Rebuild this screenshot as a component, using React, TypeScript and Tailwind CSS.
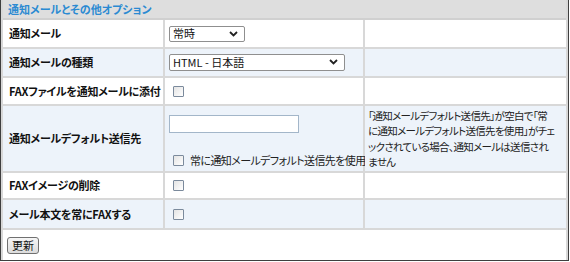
import React, { useState } from 'react';

const Chevron = () => (
  <svg width="9" height="6" viewBox="0 0 9 6" className="pointer-events-none absolute right-[7px] top-[5px]">
    <path d="M1 1 L4.5 4.5 L8 1" fill="none" stroke="#222" strokeWidth="1.8" />
  </svg>
);

const Checkbox = ({ checked, onChange }: { checked: boolean; onChange: (v: boolean) => void }) => (
  <input
    type="checkbox"
    checked={checked}
    onChange={(e) => onChange(e.target.checked)}
    className="appearance-none shrink-0 w-[11px] h-[11px] border border-[#7b8a9c] bg-gradient-to-br from-[#e4e4e4] to-white rounded-[1px] checked:bg-[#3d7fd1] m-0 block"
  />
);

const labelCls =
  "flex items-center pl-[6px] font-bold text-[11px] tracking-[-0.25px] text-[#111] whitespace-nowrap [font-feature-settings:'palt'] border-r-2 border-b-2 border-[#d8d8d8]";
const midCls = 'flex items-center pl-[4px] border-r-2 border-b-2 border-[#d8d8d8]';
const lastCls = 'border-b-2 border-[#d8d8d8]';

const App = () => {
  const [mode, setMode] = useState('always');
  const [format, setFormat] = useState('html-ja');
  const [attach, setAttach] = useState(false);
  const [dest, setDest] = useState('');
  const [useDefault, setUseDefault] = useState(false);
  const [deleteImg, setDeleteImg] = useState(false);
  const [alwaysFax, setAlwaysFax] = useState(false);

  return (
    <div className="w-[570px] h-[262px] bg-white" style={{ fontFamily: '"Noto Sans CJK JP", "Noto Sans", sans-serif' }}>
      <div className="w-[569px] border-l border-r border-b border-[#3f3f3f]">
        <div className="border-l-2 border-r-2 border-[#d8d8d8]">
          {/* header */}
          <div className="h-[20px] bg-[#dedede] border-b-2 border-[#d0d0d0] flex items-center pl-[5px]">
            <span className="text-[11px] font-bold text-[#2b8ad2] [font-feature-settings:'palt'] leading-none">
              通知メールとその他オプション
            </span>
          </div>

          {/* rows */}
          <div className="grid grid-cols-[162px_200px_1fr]">
            <div className={`${labelCls} h-[29px]`}>通知メール</div>
            <div className={midCls}>
              <div className="relative">
                <select
                  value={mode}
                  onChange={(e) => setMode(e.target.value)}
                  className="block appearance-none w-[76px] h-[16px] border border-[#8f8f8f] rounded-[2px] bg-white text-[11px] pl-[3px] py-0 leading-none text-[#111]"
                >
                  <option value="always">常時</option>
                  <option value="never">しない</option>
                </select>
                <Chevron />
              </div>
            </div>
            <div className={lastCls}></div>

            <div className={`${labelCls} h-[29px] bg-[#edf3fa]`}>通知メールの種類</div>
            <div className={`${midCls} bg-[#edf3fa]`}>
              <div className="relative">
                <select
                  value={format}
                  onChange={(e) => setFormat(e.target.value)}
                  className="block appearance-none w-[176px] h-[17px] border border-[#8f8f8f] rounded-[2px] bg-white text-[11px] pl-[3px] py-0 leading-none text-[#111]"
                >
                  <option value="html-ja">HTML - 日本語</option>
                  <option value="text-ja">テキスト - 日本語</option>
                </select>
                <Chevron />
              </div>
            </div>
            <div className={`${lastCls} bg-[#edf3fa]`}></div>

            <div className={`${labelCls} h-[28px]`}>FAXファイルを通知メールに添付</div>
            <div className={`${midCls} pl-[8px]`}>
              <Checkbox checked={attach} onChange={setAttach} />
            </div>
            <div className={lastCls}></div>

            <div className={`${labelCls} h-[67px] bg-[#edf3fa]`}>通知メールデフォルト送信先</div>
            <div className={`${midCls} bg-[#edf3fa] flex-col items-start justify-between pt-[9px] pb-[5px]`}>
              <input
                type="text"
                value={dest}
                onChange={(e) => setDest(e.target.value)}
                className="w-[130px] h-[18px] border border-[#a3b6c9] bg-white text-[11px] px-[2px] outline-none"
              />
              <label className="flex items-center gap-[6px] pl-[4px] text-[11px] tracking-[-0.6px] text-[#222] whitespace-nowrap [font-feature-settings:'palt'] leading-none">
                <Checkbox checked={useDefault} onChange={setUseDefault} />
                常に通知メールデフォルト送信先を使用
              </label>
            </div>
            <div className={`${lastCls} bg-[#edf3fa] pl-[3px] flex items-center`}>
              <p className="text-[10.5px] leading-[15.5px] tracking-[-0.7px] text-[#222] whitespace-nowrap [font-feature-settings:'palt']">
                「通知メールデフォルト送信先」が空白で「常
                <br />
                に通知メールデフォルト送信先を使用」がチェ
                <br />
                ックされている場合、通知メールは送信され
                <br />
                ません
              </p>
            </div>

            <div className={`${labelCls} h-[27px]`}>FAXイメージの削除</div>
            <div className={`${midCls} pl-[8px]`}>
              <Checkbox checked={deleteImg} onChange={setDeleteImg} />
            </div>
            <div className={lastCls}></div>

            <div className={`${labelCls} h-[30px] bg-[#edf3fa]`}>メール本文を常にFAXする</div>
            <div className={`${midCls} bg-[#edf3fa] pl-[8px]`}>
              <Checkbox checked={alwaysFax} onChange={setAlwaysFax} />
            </div>
            <div className={`${lastCls} bg-[#edf3fa]`}></div>
          </div>

          {/* button row */}
          <div className="h-[30px] flex items-center pl-[4px]">
            <button
              type="button"
              className="h-[17px] px-[4px] border border-[#707070] rounded-[3px] bg-gradient-to-b from-[#f6f6f6] to-[#dcdcdc] text-[11px] leading-none text-[#111]"
            >
              更新
            </button>
          </div>
        </div>
      </div>
    </div>
  );
};

export default App;
